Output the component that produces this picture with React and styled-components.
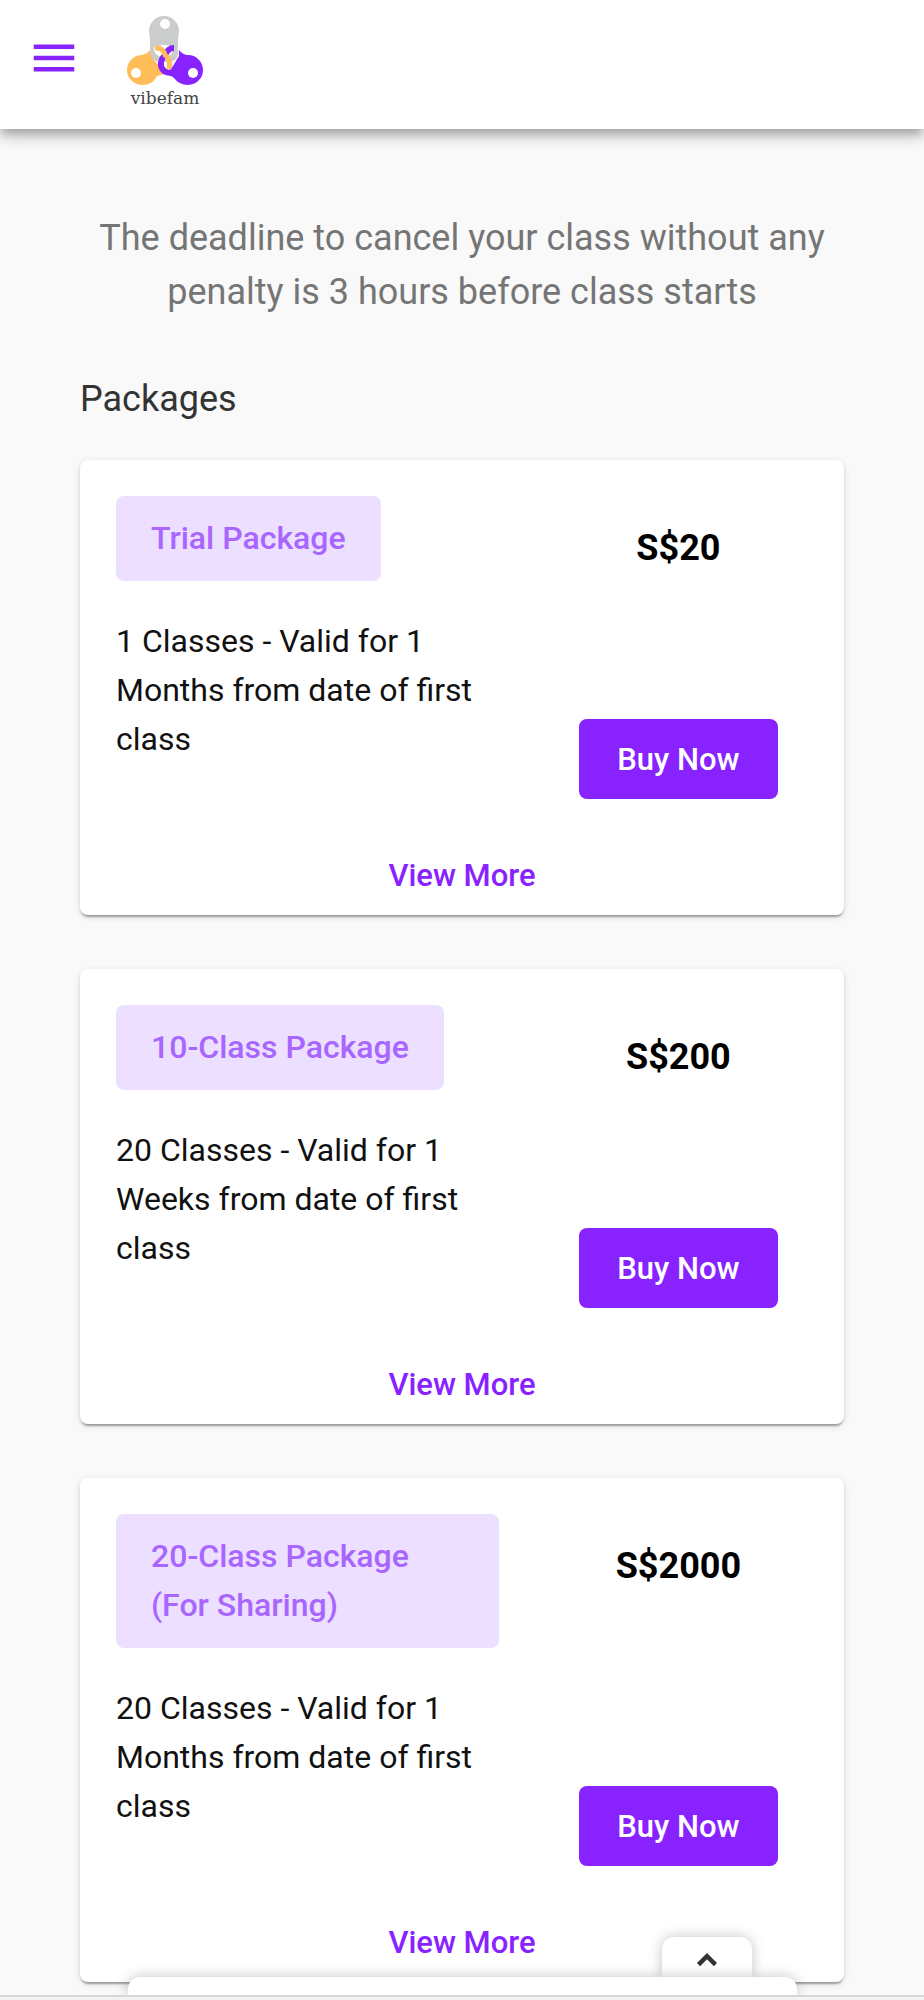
import React, { useState } from "react";
// styling
import styled, { createGlobalStyle } from "styled-components";
import { MdMenu, MdKeyboardArrowUp } from "react-icons/md";

const packages = [
  {
    id: 1,
    name: "Trial Package",
    price: "S$20",
    detail: "1 Classes - Valid for 1 Months from date of first class",
  },
  {
    id: 2,
    name: "10-Class Package",
    price: "S$200",
    detail: "20 Classes - Valid for 1 Weeks from date of first class",
  },
  {
    id: 3,
    name: "20-Class Package (For Sharing)",
    price: "S$2000",
    detail: "20 Classes - Valid for 1 Months from date of first class",
  },
];

// three linked tags
const LogoMark = () => (
  <svg width="78" height="72" viewBox="126 14 78 72" aria-hidden="true">
    <path
      fill="#cacdcc"
      fillRule="evenodd"
      d="M149 31a15 15 0 0 1 30 0l-1 8v14q0 7-7 9h-13q-8-3-8-9V39zM154 47q-1 9 10 10q10-1 9-10q-9-4-19 0z"
    />
    <path
      fill="#ffbd59"
      d="M150 50Q150 57 156 62L164 74L157 76Q153 85 142 85A15 15 0 0 1 142 55Q147 54 150 50z"
    />
    <path
      fill="#8822ff"
      d="M179 50Q183 55 188 55A15 15 0 0 1 188 85Q179 85 174 78Q171 75 166 74L173 66L179 56z"
    />
    <path
      d="M174 48Q168 48 165 55Q160 60 161 66Q163 73 171 73"
      fill="none"
      stroke="#8822ff"
      strokeWidth="6"
    />
    <path
      d="M155 48Q163 47 165 55Q171 59 169 69"
      fill="none"
      stroke="#ffbd59"
      strokeWidth="5"
    />
    <circle cx="165" cy="24" r="5" fill="#fff" />
    <circle cx="136" cy="73" r="5" fill="#fff" />
    <circle cx="193" cy="73" r="5" fill="#fff" />
  </svg>
);

const PackageCard = (props) => {
  return (
    <Card>
      <CardBody>
        <CardInfo>
          <PackageName>{props.name}</PackageName>
          <PackageDetail>{props.detail}</PackageDetail>
        </CardInfo>
        <CardSide>
          <Price>{props.price}</Price>
          <BuyBtn type="button">Buy Now</BuyBtn>
        </CardSide>
      </CardBody>
      <ViewMoreBtn type="button">View More</ViewMoreBtn>
    </Card>
  );
};

const App = () => {
  const [is_open, setOpen] = useState(false);

  return (
    <React.Fragment>
      <GlobalStyle />
      <Header>
        <MenuBtn type="button" aria-label="Menu">
          <MdMenu size={54} />
        </MenuBtn>
        <Logo href="#">
          <LogoMark />
          <LogoText>vibefam</LogoText>
        </Logo>
      </Header>
      <Main>
        <Notice>
          The deadline to cancel your class without any penalty is 3 hours
          before class starts
        </Notice>
        <Title>Packages</Title>
        <CardList>
          {packages.map((p) => (
            <PackageCard key={p.id} {...p} />
          ))}
        </CardList>
      </Main>
      {/* drawer stuck to the bottom of the window */}
      <Dock>
        <DockTab
          type="button"
          aria-label="Open panel"
          onClick={() => setOpen(!is_open)}
        >
          <MdKeyboardArrowUp size={36} />
        </DockTab>
        <DockPanel $open={is_open} />
        <DockBase />
      </Dock>
    </React.Fragment>
  );
};

const GlobalStyle = createGlobalStyle`
  * {
    box-sizing: border-box;
  }
  body {
    margin: 0;
    background: #f9f9f9;
    color: #111;
    font-family: Roboto, "Liberation Sans", sans-serif;
  }
  button {
    border: none;
    padding: 0;
    background: transparent;
    font-family: inherit;
    cursor: pointer;
  }
`;

const Header = styled.header`
  position: relative;
  height: 129px;
  padding: 0 27px;
  display: flex;
  align-items: center;
  gap: 45px;
  background: #fff;
  box-shadow: 0 5px 9px -2px rgba(0, 0, 0, 0.2),
    0 9px 11px rgba(0, 0, 0, 0.14), 0 2px 22px rgba(0, 0, 0, 0.12);
`;

const MenuBtn = styled.button`
  height: 54px;
  display: flex;
  margin-bottom: 14px;
  color: #8822ff;
`;

const Logo = styled.a`
  height: 100%;
  padding-top: 14px;
  display: flex;
  flex-direction: column;
  align-items: center;
  text-decoration: none;
`;

const LogoText = styled.span`
  font-family: "DejaVu Serif", serif;
  font-size: 17px;
  line-height: 24px;
  color: #444;
`;

const Main = styled.main`
  padding: 82px 80px 18px;
`;

const Notice = styled.p`
  margin: 0 0 53px;
  font-size: 36px;
  line-height: 54px;
  text-align: center;
  color: #757575;
`;

const Title = styled.h1`
  margin: 0 0 34px;
  font-size: 36px;
  line-height: 54px;
  font-weight: 400;
  color: #333;
`;

const CardList = styled.div`
  display: flex;
  flex-direction: column;
  gap: 54px;
`;

const Card = styled.section`
  border-radius: 8px;
  background: #fff;
  box-shadow: 0 4px 2px -2px rgba(0, 0, 0, 0.2),
    0 2px 2px rgba(0, 0, 0, 0.14), 0 2px 7px rgba(0, 0, 0, 0.12);
`;

const CardBody = styled.div`
  padding: 36px 38px 36px 36px;
  display: grid;
  grid-template-columns: 3fr 2fr;
  gap: 52px;
`;

const CardInfo = styled.div`
  padding-bottom: 35px;
  display: flex;
  flex-direction: column;
  align-items: flex-start;
  gap: 36px;
  font-size: 32px;
  line-height: 49px;
`;

const PackageName = styled.h2`
  margin: 0;
  padding: 18px 35px;
  border-radius: 8px;
  background: #ecdfff;
  font-size: 32px;
  font-weight: 500;
  color: #a866ff;
`;

const PackageDetail = styled.p`
  margin: 0;
`;

const CardSide = styled.div`
  padding-top: 25px;
  display: flex;
  flex-direction: column;
  justify-content: space-between;
  align-items: center;
`;

const Price = styled.div`
  font-size: 36px;
  line-height: 54px;
  font-weight: 700;
  color: #000;
`;

const BuyBtn = styled.button`
  height: 80px;
  padding: 0 38px;
  border-radius: 8px;
  background: #8822ff;
  font-size: 31px;
  font-weight: 500;
  color: #fff;
`;

const ViewMoreBtn = styled.button`
  width: 100%;
  height: 80px;
  font-size: 31px;
  font-weight: 500;
  color: #8822ff;
`;

const Dock = styled.div`
  position: fixed;
  left: 0;
  right: 0;
  bottom: 0;
  display: flex;
  flex-direction: column;
`;

const DockTab = styled.button`
  width: 90px;
  height: 40px;
  margin-right: 172px;
  padding-top: 6px;
  align-self: flex-end;
  display: flex;
  justify-content: center;
  align-items: center;
  border-radius: 12px 12px 0 0;
  background: #fff;
  box-shadow: 0 0 14px rgba(0, 0, 0, 0.24);
  color: #333;

  path:last-child {
    stroke: #333;
    stroke-width: 1;
  }
`;

const DockPanel = styled.div`
  height: ${(props) => (props.$open ? "240px" : "18px")};
  margin: 0 127px 0 128px;
  border-radius: 12px 12px 0 0;
  background: #fff;
  box-shadow: 0 0 14px rgba(0, 0, 0, 0.24);
`;

const DockBase = styled.div`
  height: 5px;
  border-top: 2px solid #d6d6d6;
  background: #f3f3f3;
`;

export default App;
